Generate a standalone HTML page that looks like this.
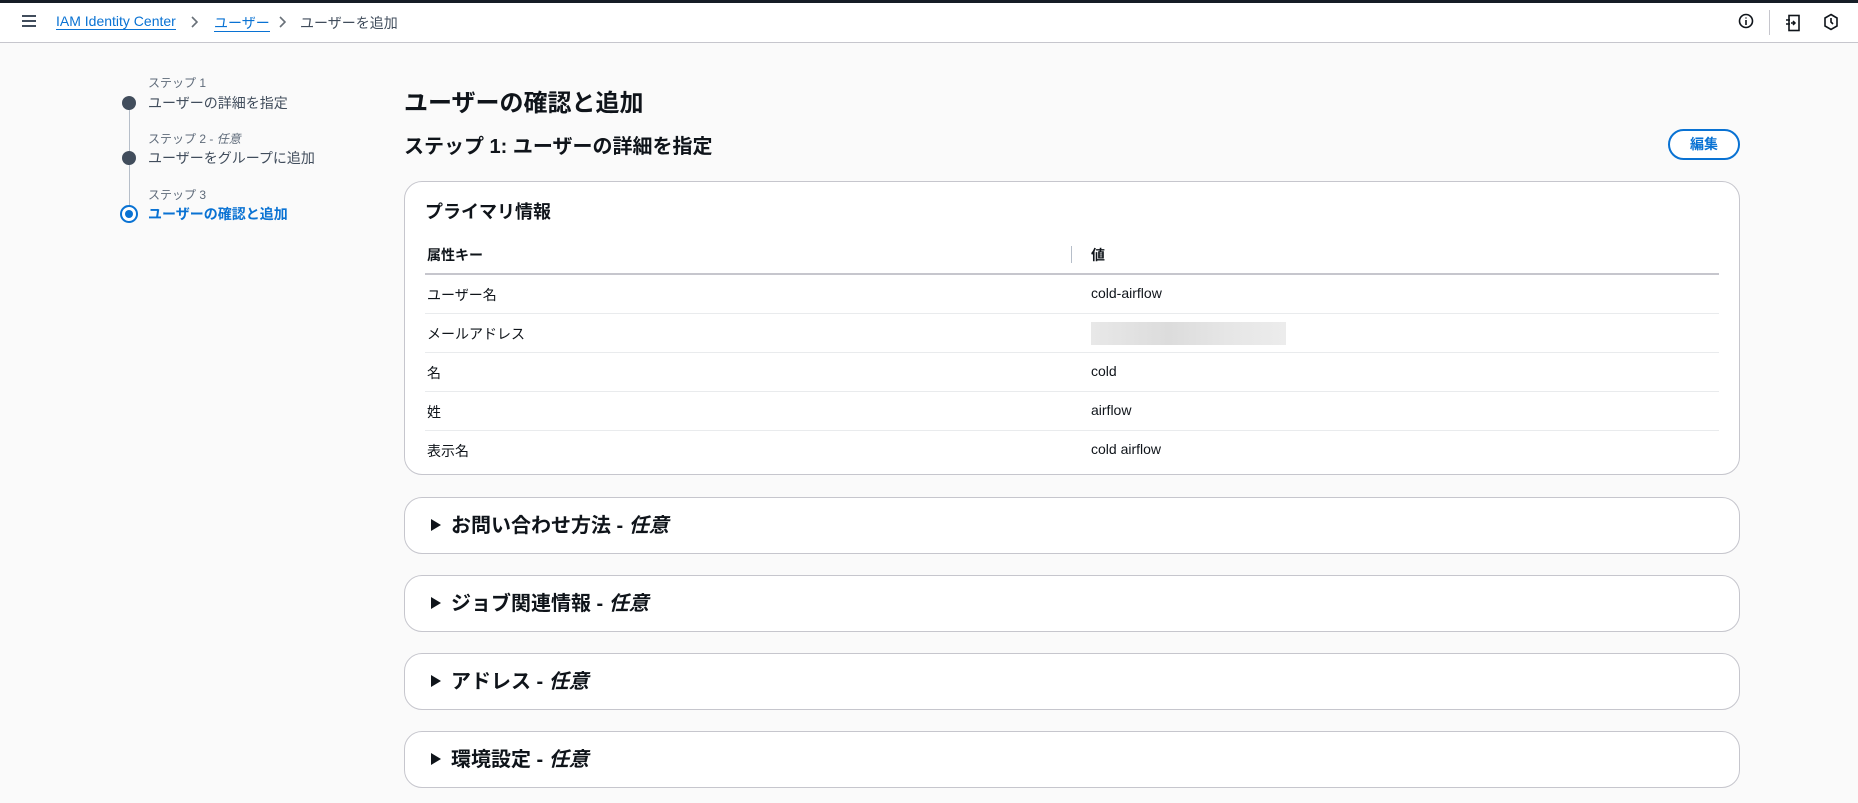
<!DOCTYPE html>
<html><head><meta charset="utf-8"><style>
*{box-sizing:border-box;margin:0;padding:0}
body{width:1858px;height:803px;overflow:hidden;background:#fafafa;font-family:"Liberation Sans","Noto Sans CJK JP",sans-serif;color:#0f141a;position:relative}
.abs{position:absolute;white-space:nowrap}
.top{position:absolute;left:0;top:0;width:1858px;height:3px;background:#161d26}
.hdr{position:absolute;left:0;top:3px;width:1858px;height:40px;background:#fff;border-bottom:1px solid #c6c6cd}
.bc{font-size:14px;top:13px}
.bc a{color:#0972d3;text-decoration:none;border-bottom:1px solid #0972d3}
.sm{font-size:12px;color:#5f6b7a}
.st{font-size:14px;color:#414d5c}
.dot{position:absolute;width:14px;height:14px;border-radius:50%;background:#414d5c}
.card{position:absolute;left:404px;width:1336px;background:#fff;border:1px solid #c6c6cd;border-radius:18px}
.row{position:absolute;left:425px;width:1294px;font-size:14px}
.sep{position:absolute;left:425px;width:1294px;height:1px;background:#e9ebed}
.exp{height:57px}
.exp .t{position:absolute;left:46px;top:11px;font-size:20px;font-weight:bold}
.exp .tri{position:absolute;left:26px;top:21px;width:0;height:0;border-left:10px solid #0f141a;border-top:6px solid transparent;border-bottom:6px solid transparent}
</style></head><body>
<div class="top"></div>
<div class="hdr"></div>
<div class="abs" style="left:22px;top:15px;width:14px;height:2px;background:#414d5c;box-shadow:0 5px 0 #414d5c,0 10px 0 #414d5c"></div>
<div class="abs bc" style="left:56px"><a>IAM Identity Center</a></div>
<svg class="abs" style="left:190px;top:16px" width="8" height="12" viewBox="0 0 8 12"><path d="M2 1l5 5-5 5" fill="none" stroke="#687078" stroke-width="1.6"/></svg>
<div class="abs bc" style="left:214px"><a>ユーザー</a></div>
<svg class="abs" style="left:278px;top:16px" width="8" height="12" viewBox="0 0 8 12"><path d="M2 1l5 5-5 5" fill="none" stroke="#687078" stroke-width="1.6"/></svg>
<div class="abs bc" style="left:300px;color:#414d5c">ユーザーを追加</div>
<svg class="abs" style="left:1738px;top:13px" width="16" height="16" viewBox="0 0 16 16"><circle cx="8" cy="8" r="6.5" fill="none" stroke="#0f141a" stroke-width="1.6"/><path d="M8 7v5M8 4.5v1" stroke="#0f141a" stroke-width="1.6"/></svg>
<div class="abs" style="left:1769px;top:10px;width:1px;height:25px;background:#c6c6cd"></div>
<svg class="abs" style="left:1785px;top:14px" width="16" height="18" viewBox="0 0 16 18"><rect x="4" y="1.5" width="10" height="15" fill="none" stroke="#0f141a" stroke-width="1.6"/><path d="M1 6h4M1 10h4M6 9l3 0M8 7l2 2-2 2" stroke="#0f141a" stroke-width="1.5" fill="none"/></svg>
<svg class="abs" style="left:1823px;top:13px" width="16" height="18" viewBox="0 0 16 18"><path d="M8 1.5l6 3.5v8l-6 3.5-6-3.5v-8z" fill="none" stroke="#0f141a" stroke-width="1.6"/><path d="M8 5v4l2 2" stroke="#0f141a" stroke-width="1.6" fill="none"/></svg>

<div class="abs" style="left:129px;top:103px;width:1px;height:112px;background:#b6bec9"></div>
<div class="abs sm" style="left:148px;top:74px">ステップ 1</div>
<div class="dot" style="left:122px;top:96px"></div>
<div class="abs st" style="left:148px;top:93px">ユーザーの詳細を指定</div>
<div class="abs sm" style="left:148px;top:130px">ステップ 2 - <i>任意</i></div>
<div class="dot" style="left:122px;top:151px"></div>
<div class="abs st" style="left:148px;top:148px">ユーザーをグループに追加</div>
<div class="abs sm" style="left:148px;top:186px">ステップ 3</div>
<div class="abs" style="left:120px;top:205px;width:18px;height:18px;border-radius:50%;border:2px solid #0972d3;background:#fff"><div style="margin:3px;width:8px;height:8px;border-radius:50%;background:#0972d3"></div></div>
<div class="abs st" style="left:148px;top:204px;color:#0972d3;font-weight:bold">ユーザーの確認と追加</div>

<div class="abs" style="left:404px;top:83px;font-size:24px;font-weight:bold">ユーザーの確認と追加</div>
<div class="abs" style="left:404px;top:130px;font-size:20px;font-weight:bold">ステップ 1: ユーザーの詳細を指定</div>
<div class="abs" style="left:1668px;top:129px;width:72px;height:31px;border:2px solid #0972d3;border-radius:16px;color:#0972d3;font-size:14px;font-weight:bold;text-align:center;line-height:27px;background:#fff">編集</div>

<div class="card" style="top:181px;height:294px"></div>
<div class="abs" style="left:425px;top:198px;font-size:18px;font-weight:bold">プライマリ情報</div>
<div class="row" style="top:245px;font-weight:bold"><span style="position:absolute;left:2px">属性キー</span><span style="position:absolute;left:666px">値</span></div>
<div class="abs" style="left:1071px;top:246px;width:1px;height:17px;background:#b6bec9"></div>
<div class="abs" style="left:425px;top:273px;width:1294px;height:2px;background:#c6c6cd"></div>
<div class="row" style="top:285px"><span style="position:absolute;left:2px">ユーザー名</span><span style="position:absolute;left:666px">cold-airflow</span></div>
<div class="sep" style="top:313px"></div>
<div class="row" style="top:324px"><span style="position:absolute;left:2px">メールアドレス</span></div>
<div class="abs" style="left:1091px;top:322px;width:195px;height:23px;background:linear-gradient(90deg,#e8e8e8,#dcdcdc 40%,#e6e6e6 70%,#ececec)"></div>
<div class="sep" style="top:352px"></div>
<div class="row" style="top:363px"><span style="position:absolute;left:2px">名</span><span style="position:absolute;left:666px">cold</span></div>
<div class="sep" style="top:391px"></div>
<div class="row" style="top:402px"><span style="position:absolute;left:2px">姓</span><span style="position:absolute;left:666px">airflow</span></div>
<div class="sep" style="top:430px"></div>
<div class="row" style="top:441px"><span style="position:absolute;left:2px">表示名</span><span style="position:absolute;left:666px">cold airflow</span></div>

<div class="card exp" style="top:497px"><div class="tri"></div><div class="t">お問い合わせ方法 - <i>任意</i></div></div>
<div class="card exp" style="top:575px"><div class="tri"></div><div class="t">ジョブ関連情報 - <i>任意</i></div></div>
<div class="card exp" style="top:653px"><div class="tri"></div><div class="t">アドレス - <i>任意</i></div></div>
<div class="card exp" style="top:731px"><div class="tri"></div><div class="t">環境設定 - <i>任意</i></div></div>
</body></html>
